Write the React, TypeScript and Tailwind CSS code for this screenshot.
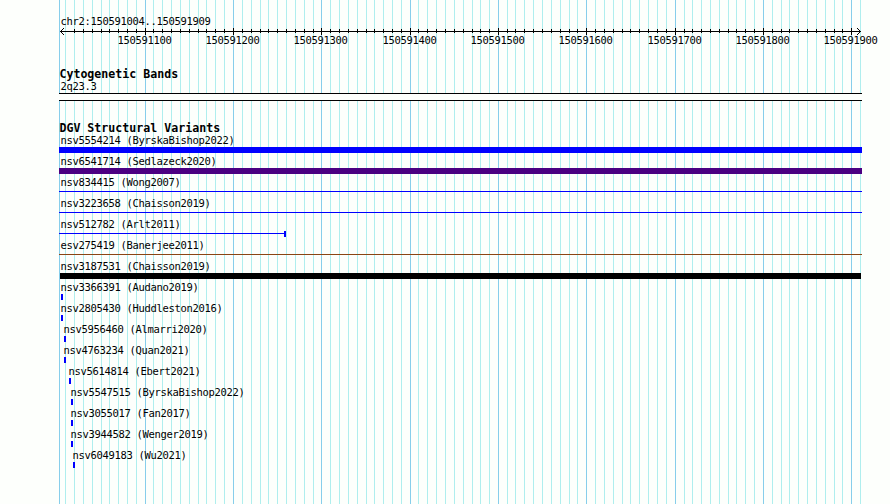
const minorLines = [
  65, 74, 83, 92, 101, 109, 118, 127, 136, 153, 162, 171, 180, 189, 198, 206, 215, 224,
  242, 251, 260, 268, 277, 286, 295, 304, 313, 330, 339, 348, 357, 366, 374, 383, 392, 401,
  418, 427, 436, 445, 454, 463, 472, 480, 489, 507, 515, 524, 533, 542, 551, 560, 569, 577,
  595, 604, 613, 622, 630, 639, 648, 657, 666, 684, 692, 701, 710, 719, 728, 736, 745, 754,
  772, 781, 789, 798, 807, 816, 825, 834, 842, 860,
];
const majorLines = [145, 233, 321, 410, 498, 586, 675, 763, 851];

type Variant = { label: string; indent: string; bar: string };

const thin = "mt-[2px] h-px w-[803px]";
const mark = "h-[6px] w-[2px] bg-[#0000ff]";

const variants: Variant[] = [
  { label: "nsv5554214 (ByrskaBishop2022)", indent: "pl-[1.5px]", bar: "h-[6px] w-[803px] bg-[#0000ff]" },
  { label: "nsv6541714 (Sedlazeck2020)", indent: "pl-[1.5px]", bar: "h-[6px] w-[803px] bg-[#4b0082]" },
  { label: "nsv834415 (Wong2007)", indent: "pl-[1.5px]", bar: `${thin} bg-[#0000ff]` },
  { label: "nsv3223658 (Chaisson2019)", indent: "pl-[1.5px]", bar: `${thin} bg-[#0000ff]` },
  { label: "nsv512782 (Arlt2011)", indent: "pl-[1.5px]", bar: "range" },
  { label: "esv275419 (Banerjee2011)", indent: "pl-[1.5px]", bar: `${thin} bg-[#8b4513]` },
  { label: "nsv3187531 (Chaisson2019)", indent: "pl-[1.5px]", bar: "ml-px h-[6px] w-[801px] bg-black" },
  { label: "nsv3366391 (Audano2019)", indent: "pl-[1.5px]", bar: `${mark} ml-[2px]` },
  { label: "nsv2805430 (Huddleston2016)", indent: "pl-[1.5px]", bar: `${mark} ml-[2px]` },
  { label: "nsv5956460 (Almarri2020)", indent: "pl-[4.5px]", bar: `${mark} ml-[5px]` },
  { label: "nsv4763234 (Quan2021)", indent: "pl-[4.5px]", bar: `${mark} ml-[5px]` },
  { label: "nsv5614814 (Ebert2021)", indent: "pl-[9.5px]", bar: `${mark} ml-[10px]` },
  { label: "nsv5547515 (ByrskaBishop2022)", indent: "pl-[11.5px]", bar: `${mark} ml-[12px]` },
  { label: "nsv3055017 (Fan2017)", indent: "pl-[11.5px]", bar: `${mark} ml-[12px]` },
  { label: "nsv3944582 (Wenger2019)", indent: "pl-[11.5px]", bar: `${mark} ml-[12px]` },
  { label: "nsv6049183 (Wu2021)", indent: "pl-[13.5px]", bar: `${mark} ml-[14px]` },
];

function GridLines() {
  return (
    <svg className="absolute inset-0" width="890" height="504" shapeRendering="crispEdges">
      {minorLines.map((x) => (
        <rect key={x} x={x} y="0" width="1" height="504" fill="#afeeee" />
      ))}
      {[59, ...majorLines].map((x) => (
        <rect key={x} x={x} y="0" width="1" height="504" fill="#87ceeb" />
      ))}
    </svg>
  );
}

function Ruler() {
  return (
    <svg className="block" width="831" height="22" viewBox="59 26 831 22">
      <g fill="#000" shapeRendering="crispEdges">
        <rect x="60" y="31" width="801" height="1" />
        {minorLines.slice(1, -1).map((x) => (
          <rect key={x} x={x} y="29" width="1" height="4" />
        ))}
        {majorLines.map((x) => (
          <rect key={x} x={x} y="28" width="1" height="7" />
        ))}
        {[1, 2, 3].map((d) => (
          <g key={d}>
            <rect x={60 + d} y={31 - d} width="1" height="1" />
            <rect x={60 + d} y={31 + d} width="1" height="1" />
            <rect x={860 - d} y={31 - d} width="1" height="1" />
            <rect x={860 - d} y={31 + d} width="1" height="1" />
          </g>
        ))}
      </g>
      {majorLines.map((x, i) => (
        <text key={x} x={x - 27.5} y="44" fill="#000">
          {150591100 + i * 100}
        </text>
      ))}
    </svg>
  );
}

function Bar({ style }: { style: string }) {
  if (style === "range") {
    return (
      <div className="flex h-[6px] items-start">
        <div className="mt-[2px] h-px w-[225px] bg-[#0000ff]" />
        <div className="h-[6px] w-[2px] bg-[#0000ff]" />
      </div>
    );
  }
  return <div className={style} />;
}

const heading =
  "h-[12px] pl-[0.4px] whitespace-pre text-[11.6px] leading-[12px] font-bold tracking-[0.016px]";

export default function App() {
  return (
    <div className="relative h-[504px] w-[890px] overflow-hidden bg-[#fdfffc] font-['DejaVu_Sans_Mono',monospace] text-[10.5px] tracking-[-0.322px] text-black">
      <GridLines />
      <main className="relative flex flex-col pt-[15px] pl-[59px]">
        <div className="h-[11px] pl-[1.5px] leading-[12px] whitespace-pre">chr2:150591004..150591909</div>
        <Ruler />
        <section className="mt-[20px] flex flex-col">
          <h2 className={heading}>Cytogenetic Bands</h2>
          <div className="h-[13px] pl-[1.5px] leading-[13px] whitespace-pre">2q23.3</div>
          <div className="h-[8px] w-[803px] border-y border-black bg-[#fdfffc]" />
        </section>
        <section className="mt-[21px] flex flex-col">
          <h2 className={heading}>DGV Structural Variants</h2>
          {variants.map((v) => (
            <div key={v.label} className="flex h-[21px] flex-col">
              <div className={`h-[13px] shrink-0 leading-[13px] whitespace-pre ${v.indent}`}>{v.label}</div>
              <Bar style={v.bar} />
            </div>
          ))}
        </section>
      </main>
    </div>
  );
}
